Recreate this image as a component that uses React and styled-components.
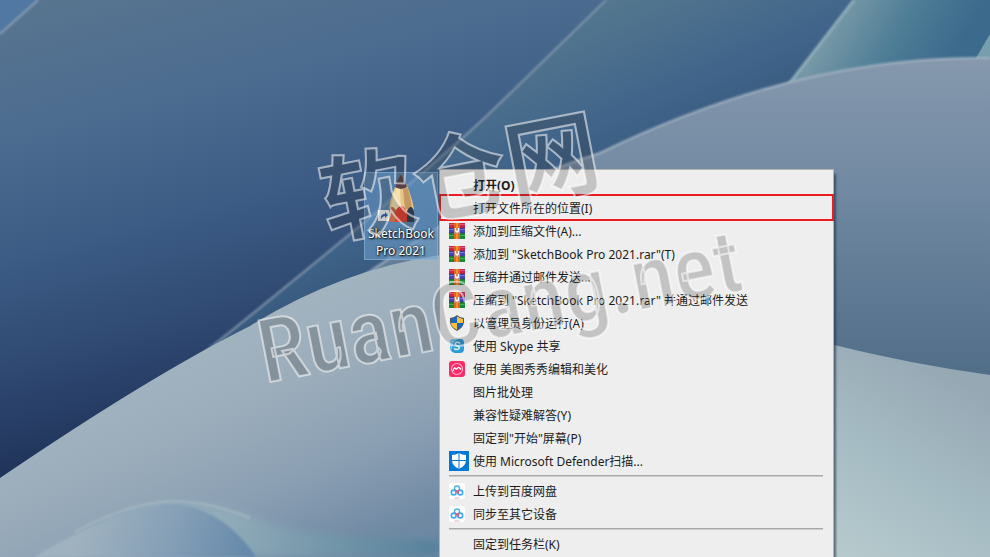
import React from 'react';
import styled, { createGlobalStyle, css } from 'styled-components';

const GlobalStyle = createGlobalStyle`
  * { box-sizing: border-box; }
  html, body, #root { height: 100%; }
  body {
    margin: 0;
    overflow: hidden;
    font-family: "Noto Sans", "Noto Sans CJK SC", sans-serif;
    font-size: 12px;
  }
`;

const Desktop = styled.main`
  position: relative;
  width: 100%;
  height: 100vh;
  overflow: hidden;
  background: #46688c;
`;

const WallpaperArt = styled.svg`
  display: block;
  width: 100%;
  height: 100%;
`;

const Shortcut = styled.a`
  position: absolute;
  left: 364px;
  top: 172px;
  width: 74px;
  height: 88px;
  display: flex;
  flex-direction: column;
  align-items: center;
  gap: 2px;
  border: 1px solid rgba(150, 190, 225, 0.5);
  background: rgba(110, 160, 205, 0.55);
  color: #fff;
  font-size: 12px;
  line-height: 17px;
  text-align: center;
  text-decoration: none;
  text-shadow: 1px 1px 2px #000, 0 0 2px #000;
`;

const ShortcutArt = styled.svg`
  width: 50px;
  height: 50px;
  flex: none;
`;

const Menu = styled.div`
  position: absolute;
  left: 439px;
  top: 169px;
  width: 395px;
  display: flex;
  flex-direction: column;
  padding: 3px 0;
  border: 1px solid #b4b4b4;
  background: #eeeeee;
  box-shadow: 2px 5px 2px rgba(30, 45, 60, 0.6);
`;

const MenuItem = styled.button`
  display: flex;
  align-items: center;
  height: 23px;
  padding: 0 9px;
  border: 0;
  background: transparent;
  color: #1c1c1c;
  font: inherit;
  font-weight: ${(p) => (p.$bold ? 700 : 400)};
  text-align: left;
  white-space: pre;
  ${(p) =>
    p.$marked &&
    css`
      height: 27px;
      margin: -2px -1px;
      padding: 0 10px;
      outline: 2px solid #ec1c24;
      outline-offset: -2px;
    `}
`;

const IconSlot = styled.span`
  display: flex;
  align-items: center;
  width: 24px;
  height: 20px;
  flex: none;
`;

const Glyph = styled.svg`
  display: block;
  width: ${(p) => p.$size}px;
  height: ${(p) => p.$size}px;
`;

const Separator = styled.hr`
  height: 2px;
  margin: 3px 10px 2px 9px;
  border: 0;
  border-top: 1px solid #a8a8a8;
  border-bottom: 1px solid #cccccc;
`;

const Watermark = styled.div`
  position: absolute;
  left: 242px;
  top: 116px;
  display: flex;
  flex-direction: column;
  align-items: flex-start;
  gap: 32px;
  transform: rotate(-11deg);
  color: rgba(45, 45, 45, 0.22);
  -webkit-text-stroke: 2px rgba(255, 255, 255, 0.55);
  white-space: nowrap;
  pointer-events: none;
`;

const MarkTitle = styled.span`
  margin-left: 90px;
  font-family: "Noto Sans CJK SC", sans-serif;
  font-size: 94px;
  font-weight: 700;
  line-height: 100px;
`;

const MarkSite = styled.span`
  font-family: "Roboto Condensed", "Open Sans Condensed", "Liberation Sans Narrow", "Liberation Sans", sans-serif;
  font-size: 88px;
  font-weight: 500;
  line-height: 120px;
`;

function Wallpaper() {
  return (
    <WallpaperArt viewBox="0 0 990 557" preserveAspectRatio="xMidYMid slice" aria-hidden="true">
      <defs>
        <linearGradient id="deep" gradientUnits="userSpaceOnUse" x1="80" y1="-10" x2="200" y2="460">
          <stop offset="0" stopColor="#58758f" />
          <stop offset="0.25" stopColor="#4c6c90" />
          <stop offset="0.5" stopColor="#3c5c85" />
          <stop offset="0.75" stopColor="#2d466f" />
          <stop offset="0.95" stopColor="#1f3258" />
        </linearGradient>
        <linearGradient id="band" gradientUnits="userSpaceOnUse" x1="600" y1="0" x2="690" y2="210">
          <stop offset="0" stopColor="#55788f" />
          <stop offset="0.5" stopColor="#40648a" />
          <stop offset="1" stopColor="#304d70" />
        </linearGradient>
        <linearGradient id="teal" gradientUnits="userSpaceOnUse" x1="850" y1="0" x2="950" y2="60">
          <stop offset="0" stopColor="#7597a6" />
          <stop offset="0.5" stopColor="#4e7d96" />
          <stop offset="1" stopColor="#3b6a8d" />
        </linearGradient>
        <linearGradient id="dome" gradientUnits="userSpaceOnUse" x1="850" y1="60" x2="850" y2="380">
          <stop offset="0" stopColor="#8598ad" />
          <stop offset="0.4" stopColor="#7189a2" />
          <stop offset="1" stopColor="#506d88" />
        </linearGradient>
        <linearGradient id="mist" gradientUnits="userSpaceOnUse" x1="230" y1="330" x2="330" y2="560">
          <stop offset="0" stopColor="#a2b3c0" />
          <stop offset="0.3" stopColor="#9badbb" />
          <stop offset="0.65" stopColor="#8b9fb3" />
          <stop offset="1" stopColor="#6f89a3" />
        </linearGradient>
        <linearGradient id="pale" gradientUnits="userSpaceOnUse" x1="960" y1="380" x2="850" y2="557">
          <stop offset="0" stopColor="#96a8b4" />
          <stop offset="0.5" stopColor="#a5bbc3" />
          <stop offset="1" stopColor="#b6cacd" />
        </linearGradient>
        <linearGradient id="wave" gradientUnits="userSpaceOnUse" x1="90" y1="500" x2="250" y2="560">
          <stop offset="0" stopColor="#a0b2bf" />
          <stop offset="0.5" stopColor="#86a0b7" />
          <stop offset="1" stopColor="#6488aa" />
        </linearGradient>
        <linearGradient id="tail" gradientUnits="userSpaceOnUse" x1="230" y1="510" x2="440" y2="550">
          <stop offset="0" stopColor="#90abb9" />
          <stop offset="1" stopColor="#55809a" />
        </linearGradient>
        <filter id="soft" x="-10%" y="-10%" width="120%" height="120%">
          <feGaussianBlur stdDeviation="1" />
        </filter>
        <filter id="haze" x="-10%" y="-30%" width="120%" height="160%">
          <feGaussianBlur stdDeviation="4" />
        </filter>
      </defs>
      <rect width="990" height="557" fill="url(#deep)" />
      <path d="M0 0H38L0 34Z" fill="#5078a2" />
      <path d="M38 0L0 34" stroke="#8b9fb6" strokeWidth="2" filter="url(#soft)" />
      <path d="M606 0L495 108Q420 180 190 364L440 250L790 90L860 0Z" fill="url(#band)" />
      <path d="M606 0L495 108Q420 180 190 364" fill="none" stroke="#8095ab" strokeWidth="2" filter="url(#soft)" />
      <path d="M854 0L784 90L990 60V0Z" fill="url(#teal)" />
      <path d="M854 0L786 88" stroke="#8eabb9" strokeWidth="3" filter="url(#soft)" />
      <path d="M990 34L976 58H990Z" fill="#769eac" />
      <path d="M340 293Q480 190 600 153Q800 55 990 58V400H836L440 300Z" fill="url(#dome)" />
      <path d="M340 293Q480 190 600 153Q800 55 990 58" fill="none" stroke="#a0b1c1" strokeWidth="2" filter="url(#soft)" />
      <path d="M0 478Q150 376 250 326Q340 270 440 255V557H0Z" fill="url(#mist)" />
      <path d="M830 344Q910 364 990 375V557H830Z" fill="url(#pale)" />
      <path d="M34 557Q130 502 175 501Q220 502 285 528Q350 540 440 539V557Z" fill="url(#tail)" filter="url(#haze)" />
      <path d="M34 557Q125 504 175 504Q225 510 256 557Z" fill="url(#wave)" filter="url(#soft)" />
      <path d="M75 532Q130 502 175 501Q210 502 250 518" fill="none" stroke="#a3b5c1" strokeWidth="2" filter="url(#soft)" />
    </WallpaperArt>
  );
}

function PencilIcon() {
  return (
    <ShortcutArt viewBox="11 0 50 50" aria-hidden="true">
      <path d="M36 1Q26 20 24 36V49H49V36Q46 18 36 1Z" fill="#e4c58c" />
      <path d="M36 1Q32 7 30 14Q36 18 42 14Q40 7 36 1Z" fill="#56434a" />
      <path d="M31 15Q27 24 26 36H36L35 16Z" fill="#f4dfad" />
      <path d="M42 14Q46 24 47 36H40L38 16Z" fill="#c69860" />
      <path d="M24 36Q28 31 31 38V49H24Z" fill="#b96c4c" />
      <path d="M30 49V39Q36 27 42 39V49Z" fill="#e33b2c" />
      <path d="M42 49V38Q46 30 49 38V49Z" fill="#2e3d4d" />
      <path d="M13 37H24V48H13Z" fill="#f3f5f7" />
      <path d="M16 46Q15 41 20 41V39L23 42L20 45V43Q18 43 16 46Z" fill="#2764ad" />
    </ShortcutArt>
  );
}

function RarIcon() {
  return (
    <Glyph $size={16} viewBox="0 0 16 16" aria-hidden="true">
      <path d="M0 0H16V5H0Z" fill="#c9264f" />
      <path d="M0 1H16V2H0Z" fill="#e0557a" />
      <path d="M0 5H16V10H0Z" fill="#4646b4" />
      <path d="M0 6H16V7H0Z" fill="#7474d6" />
      <path d="M0 10H16V16H0Z" fill="#178a3a" />
      <path d="M0 12H16V13H0Z" fill="#3fae56" />
      <path d="M0 5H16M0 10H16" stroke="#30304c" strokeWidth="0.6" />
      <path d="M5 0H11V16H5Z" fill="#e2641f" />
      <path d="M7 0H9V16H7Z" fill="#f2922e" />
      <path d="M5 5H11V11H5Z" fill="#d08a70" />
      <path d="M6.500 5V8.500H9.500V5M8 7V10" stroke="#fff" fill="none" />
    </Glyph>
  );
}

function ShieldIcon() {
  return (
    <Glyph $size={16} viewBox="0 0 16 16" aria-hidden="true">
      <path d="M8 0Q11 3 15 3V7Q15 12 8 16Q1 12 1 7V3Q5 3 8 0Z" fill="#54585c" />
      <path d="M8 1.3V8H2V4Q5 4 8 1.3Z" fill="#1668c4" />
      <path d="M8 1.3V8H14V4Q11 4 8 1.3Z" fill="#fcc13b" />
      <path d="M2 8H8V14.8Q2 12 2 8Z" fill="#fcc13b" />
      <path d="M14 8H8V14.8Q14 12 14 8Z" fill="#1668c4" />
    </Glyph>
  );
}

function SkypeIcon() {
  return (
    <Glyph $size={16} viewBox="0 0 16 16" aria-hidden="true">
      <path d="M1 4Q1 1 5 1H12Q15 1 15 5V11Q15 15 11 15H6Q1 14 1 9Z" fill="#2c9bd6" />
      <path d="M1 4Q1 1 5 1H9Q3 3 3 12Q1 10 1 8Z" fill="#7fcbea" />
      <path d="M10.5 5Q8 3.5 6.400 5Q5.400 7 8 7.700Q11 8.500 10 10.500Q8 12.500 5.500 10.800" fill="none" stroke="#dff2fb" strokeWidth="1.500" strokeLinecap="round" />
    </Glyph>
  );
}

function MeituIcon() {
  return (
    <Glyph $size={16} viewBox="0 0 16 16" aria-hidden="true">
      <rect width="16" height="16" rx="3" fill="#fb2a68" />
      <circle cx="8" cy="8" r="5.500" fill="none" stroke="#ffb3c8" strokeWidth="1.100" />
      <path d="M4 10Q5 6 6.500 7.500Q7.500 9 8.500 7Q10 5.500 12 8.500" fill="none" stroke="#fff" strokeWidth="1.400" />
    </Glyph>
  );
}

function DefenderIcon() {
  return (
    <Glyph $size={20} viewBox="0 0 20 20" aria-hidden="true">
      <rect width="20" height="20" fill="#0078d7" />
      <path d="M10 2Q13 4 17 4V9Q17 15 10 18Q3 15 3 9V4Q7 4 10 2Z" fill="#fff" />
      <path d="M10 2V18M3 9.500H17" stroke="#0078d7" />
    </Glyph>
  );
}

function BaiduIcon() {
  return (
    <Glyph $size={16} viewBox="0 0 16 16" aria-hidden="true">
      <rect width="16" height="16" rx="3" fill="#fff" />
      <circle cx="8" cy="5.500" r="2.600" fill="none" stroke="#4db5f0" strokeWidth="1.500" />
      <circle cx="4.700" cy="9.500" r="2.400" fill="none" stroke="#3aaaf2" strokeWidth="1.600" />
      <circle cx="11.300" cy="9.500" r="2.400" fill="none" stroke="#3aaaf2" strokeWidth="1.600" />
      <path d="M6 7L10 10.500M10 7L8 9" stroke="#ee5470" strokeWidth="1.400" />
      <path d="M5.500 15H8" stroke="#f2a0b4" />
      <path d="M8 15H10.500" stroke="#9fc8f5" />
    </Glyph>
  );
}

const groups = [
  [
    { label: '打开(O)', bold: true },
    { label: '打开文件所在的位置(I)', marked: true },
    { label: '添加到压缩文件(A)...', Icon: RarIcon },
    { label: '添加到 "SketchBook Pro 2021.rar"(T)', Icon: RarIcon },
    { label: '压缩并通过邮件发送...', Icon: RarIcon },
    { label: '压缩到 "SketchBook Pro 2021.rar" 并通过邮件发送', Icon: RarIcon },
    { label: '以管理员身份运行(A)', Icon: ShieldIcon },
    { label: '使用 Skype 共享', Icon: SkypeIcon },
    { label: '使用 美图秀秀编辑和美化', Icon: MeituIcon },
    { label: '图片批处理' },
    { label: '兼容性疑难解答(Y)' },
    { label: '固定到"开始"屏幕(P)' },
    { label: '使用 Microsoft Defender扫描...', Icon: DefenderIcon },
  ],
  [
    { label: '上传到百度网盘', Icon: BaiduIcon },
    { label: '同步至其它设备', Icon: BaiduIcon },
  ],
  [{ label: '固定到任务栏(K)' }],
];

export default function App() {
  return (
    <>
      <GlobalStyle />
      <Desktop>
        <Wallpaper />
        <Shortcut href="#sketchbook">
          <PencilIcon />
          <span>SketchBook<br />Pro 2021</span>
        </Shortcut>
        <Menu role="menu">
          {groups.map((items, index) => (
            <React.Fragment key={index}>
              {index > 0 && <Separator />}
              {items.map(({ label, Icon, bold, marked }) => (
                <MenuItem key={label} type="button" role="menuitem" $bold={bold} $marked={marked}>
                  <IconSlot>{Icon && <Icon />}</IconSlot>
                  {label}
                </MenuItem>
              ))}
            </React.Fragment>
          ))}
        </Menu>
        <Watermark aria-hidden="true">
          <MarkTitle>软仓网</MarkTitle>
          <MarkSite>RuanCang.net</MarkSite>
        </Watermark>
      </Desktop>
    </>
  );
}
